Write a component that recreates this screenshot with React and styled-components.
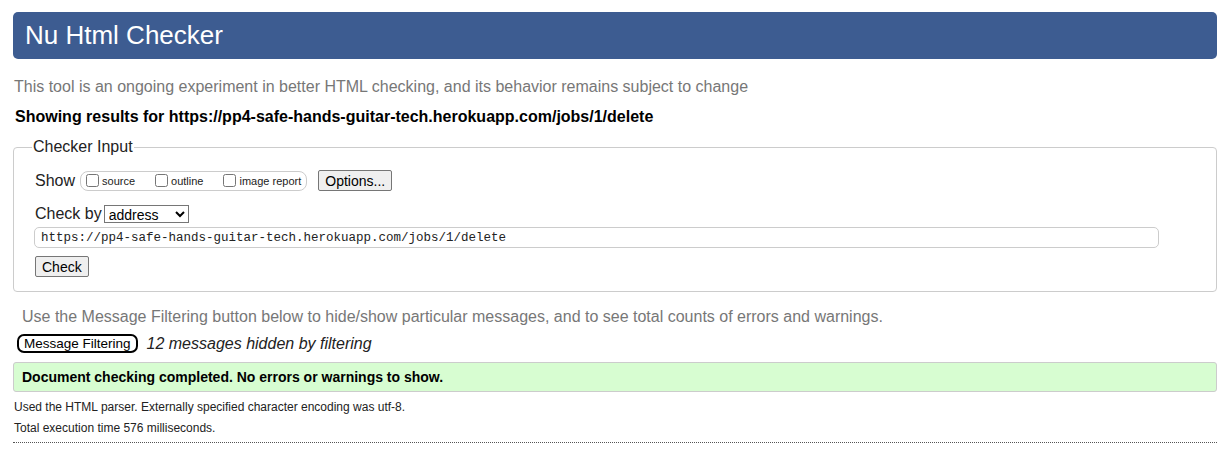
import React from 'react';
import styled, { createGlobalStyle } from 'styled-components';

const GlobalStyle = createGlobalStyle`
   html, body {
      margin: 0;
      background: #fff;
   }
   body {
      font-family: "Liberation Sans", Arial, sans-serif;
      color: #000;
   }
`;

const Page = styled.div`
   padding: 12px 14px 0 13px;
`;

const Header = styled.h1`
   margin: 0;
   height: 47px;
   line-height: 46px;
   padding-left: 12px;
   background: #3d5c91;
   border-radius: 5px;
   color: #fff;
   font-size: 26px;
   font-weight: normal;
`;

const Intro = styled.p`
   margin: 19px 0 0 1px;
   font-size: 16px;
   line-height: 18px;
   color: #777;
`;

const ResultsFor = styled.p`
   margin: 12px 0 0 2px;
   font-size: 16px;
   line-height: 18px;
   font-weight: bold;
`;

const Fieldset = styled.fieldset`
   margin: 12px 0 0 0;
   padding: 14px 20px 14px 21px;
   border: 1px solid #ccc;
   border-radius: 4px;
`;

const Legend = styled.legend`
   margin-left: -3px;
   padding: 0 1px;
   font-size: 16px;
   color: #222;
`;

const Row = styled.div`
   display: flex;
   align-items: center;
   margin-bottom: ${p => p.$gap || 0}px;
`;

const Label = styled.span`
   font-size: 16px;
   color: #222;
   margin-right: ${p => p.$gap || 4}px;
`;

const Pill = styled.span`
   display: inline-flex;
   align-items: center;
   height: 18px;
   padding: 0 5px 0 5px;
   border: 1px solid #ccc;
   border-radius: 8px;
`;

const Check = styled.label`
   display: inline-flex;
   align-items: center;
   font-size: 11px;
   color: #222;
   margin-right: ${p => p.$gap || 0}px;

   input {
      width: 13px;
      height: 13px;
      margin: 0 3px 0 0;
   }
`;

const Button = styled.button`
   font-family: "Liberation Sans", Arial, sans-serif;
   font-size: 14px;
   height: 21px;
   padding: 0 6px;
   background: #efefef;
   border: 1px solid #767676;
   border-radius: 2px;
   color: #000;
   margin-left: ${p => p.$left || 0}px;
`;

const Select = styled.select`
   font-family: "Liberation Sans", Arial, sans-serif;
   font-size: 14px;
   width: 85px;
   height: 18px;
   padding: 0;
   border: 1px solid #767676;
   border-radius: 0;
   background: #fff;
   color: #000;
`;

const UrlInput = styled.input`
   display: block;
   box-sizing: border-box;
   width: 1125px;
   height: 21px;
   margin: 4px 0 8px -1px;
   padding: 0 6px;
   border: 1px solid #ccc;
   border-radius: 5px;
   font-family: "Liberation Mono", "DejaVu Sans Mono", monospace;
   font-size: 12.5px;
   color: #222;
`;

const FilterNote = styled.p`
   margin: 16px 0 0 9px;
   font-size: 16px;
   line-height: 18px;
   color: #777;
`;

const FilterRow = styled.div`
   display: flex;
   align-items: center;
   margin: 8px 0 0 4px;
`;

const FilterButton = styled.button`
   font-family: "Liberation Sans", Arial, sans-serif;
   font-size: 13.5px;
   height: 19px;
   padding: 0 5px;
   background: #fff;
   border: 2px solid #000;
   border-radius: 7px;
   color: #000;
`;

const Hidden = styled.em`
   margin-left: 9px;
   font-size: 16px;
   color: #222;
`;

const Success = styled.div`
   margin-top: 9px;
   height: 28px;
   line-height: 28px;
   padding-left: 8px;
   background: #d7fdd1;
   border: 1px solid #ccc;
   border-radius: 3px;
   font-size: 14px;
   font-weight: bold;
`;

const Detail = styled.p`
   margin: ${p => p.$top}px 0 0 1px;
   font-size: 12px;
   line-height: 14px;
   color: #222;
`;

const Rule = styled.hr`
   margin: 7px 0 0 0;
   border: none;
   border-top: 1px dotted #555;
`;

export default function App() {
   return (
      <Page>
         <GlobalStyle />
         <Header>Nu Html Checker</Header>
         <Intro>This tool is an ongoing experiment in better HTML checking, and its behavior remains subject to change</Intro>
         <ResultsFor>Showing results for https://pp4-safe-hands-guitar-tech.herokuapp.com/jobs/1/delete</ResultsFor>
         <Fieldset>
            <Legend>Checker Input</Legend>
            <Row $gap={14}>
               <Label $gap={5}>Show</Label>
               <Pill>
                  <Check $gap={20}><input type="checkbox" />source</Check>
                  <Check $gap={20}><input type="checkbox" />outline</Check>
                  <Check><input type="checkbox" />image report</Check>
               </Pill>
               <Button $left={11}>Options...</Button>
            </Row>
            <Row>
               <Label $gap={2}>Check by</Label>
               <Select defaultValue="address">
                  <option value="address">address</option>
               </Select>
            </Row>
            <UrlInput readOnly value="https://pp4-safe-hands-guitar-tech.herokuapp.com/jobs/1/delete" />
            <Button>Check</Button>
         </Fieldset>
         <FilterNote>Use the Message Filtering button below to hide/show particular messages, and to see total counts of errors and warnings.</FilterNote>
         <FilterRow>
            <FilterButton>Message Filtering</FilterButton>
            <Hidden>12 messages hidden by filtering</Hidden>
         </FilterRow>
         <Success>Document checking completed. No errors or warnings to show.</Success>
         <Detail $top={8}>Used the HTML parser. Externally specified character encoding was utf-8.</Detail>
         <Detail $top={7}>Total execution time 576 milliseconds.</Detail>
         <Rule />
      </Page>
   );
}
